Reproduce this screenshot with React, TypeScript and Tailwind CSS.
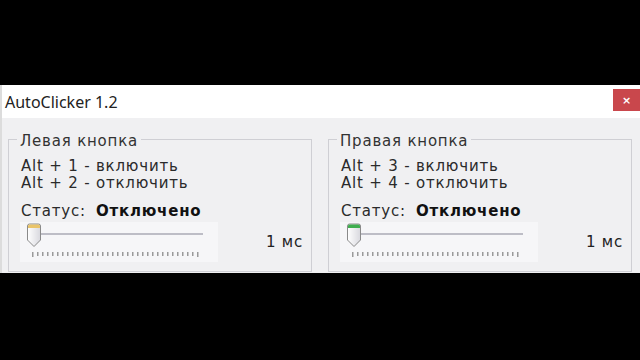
import React from "react";

function Thumb({ color }: { color: "yellow" | "green" }) {
  const top = color === "yellow" ? "#e9c46a" : "#3fae4f";
  const id = color === "yellow" ? "gy" : "gg";
  return (
    <svg width="16" height="25" viewBox="0 0 16 25" className="block">
      <defs>
        <linearGradient id={id} x1="0" x2="1" y1="0" y2="0">
          <stop offset="0" stopColor="#ffffff" />
          <stop offset="1" stopColor="#d8d8de" />
        </linearGradient>
      </defs>
      <path d="M1.5 3 Q1.5 1 3.5 1 H12.5 Q14.5 1 14.5 3 V17 L8 23.5 L1.5 17 Z" fill={`url(#${id})`} stroke="#8a8a8a" strokeWidth="1" />
      <path d="M2 3 Q2 1.5 3.5 1.5 H12.5 Q14 1.5 14 3 V5 H2 Z" fill={top} />
    </svg>
  );
}

function Ticks() {
  const ticks = [];
  for (let i = 0; i < 34; i++) {
    ticks.push(<rect key={i} x={i * 5} y={0} width={1.5} height={i === 0 || i === 33 ? 5 : 4} fill="#9a9a9a" />);
  }
  return (
    <svg width="172" height="5" className="block">
      {ticks}
    </svg>
  );
}

function Group({ title, on, off, color }: { title: string; on: string; off: string; color: "yellow" | "green" }) {
  return (
    <fieldset className="w-[304px] h-[144px] border border-[#cfcfd4] px-2 pb-2">
      <legend className="px-[3px] pt-[5px] text-[15px] leading-[17px] tracking-[0.8px] text-[#333]">{title}</legend>
      <div className="pl-1 text-[15px] leading-[17px] tracking-[0.8px] text-[#2a2a2a]">
        <div className="mt-[8px]">{on}</div>
        <div>{off}</div>
        <div className="mt-[11px] flex gap-[10px]">
          <span>Статус:</span>
          <span className="font-bold text-[#111]">Отключено</span>
        </div>
        <div className="mt-[2px] flex items-center justify-between">
          <div className="relative -ml-px w-[198px] h-[40px] bg-[#f6f6f8]">
            <div className="absolute left-[15px] right-[15px] top-[11px] h-[2px] bg-[#bdbdc6]" />
            <div className="absolute left-[6px] top-[1px]">
              <Thumb color={color} />
            </div>
            <div className="absolute left-[12px] top-[30px]">
              <Ticks />
            </div>
          </div>
          <span className="text-[#222]">1 мс</span>
        </div>
      </div>
    </fieldset>
  );
}

export default function App() {
  return (
    <div className="w-[640px] h-[360px] bg-black pt-[85px]" style={{ fontFamily: '"DejaVu Sans", Tahoma, sans-serif' }}>
      <div className="w-[640px] h-[188px] bg-[#f0f0f2] border-l-2 border-[#dcdcdc] flex flex-col">
        <div className="h-[33px] bg-white flex items-start justify-between">
          <span className="mt-[7px] ml-[3px] text-[16px] leading-[20px] text-[#222]" style={{ fontFamily: '"Noto Sans", "Open Sans", sans-serif' }}>
            AutoClicker 1.2
          </span>
          <div className="mt-[4px] w-[27px] h-[22px] bg-[#c9474c] flex items-center justify-center text-white text-[11px] leading-none font-bold">
            ×
          </div>
        </div>
        <div className="flex gap-[16px] pl-[6px] pt-[10px]">
          <Group title="Левая кнопка" on="Alt + 1 - включить" off="Alt + 2 - отключить" color="yellow" />
          <Group title="Правая кнопка" on="Alt + 3 - включить" off="Alt + 4 - отключить" color="green" />
        </div>
      </div>
    </div>
  );
}
